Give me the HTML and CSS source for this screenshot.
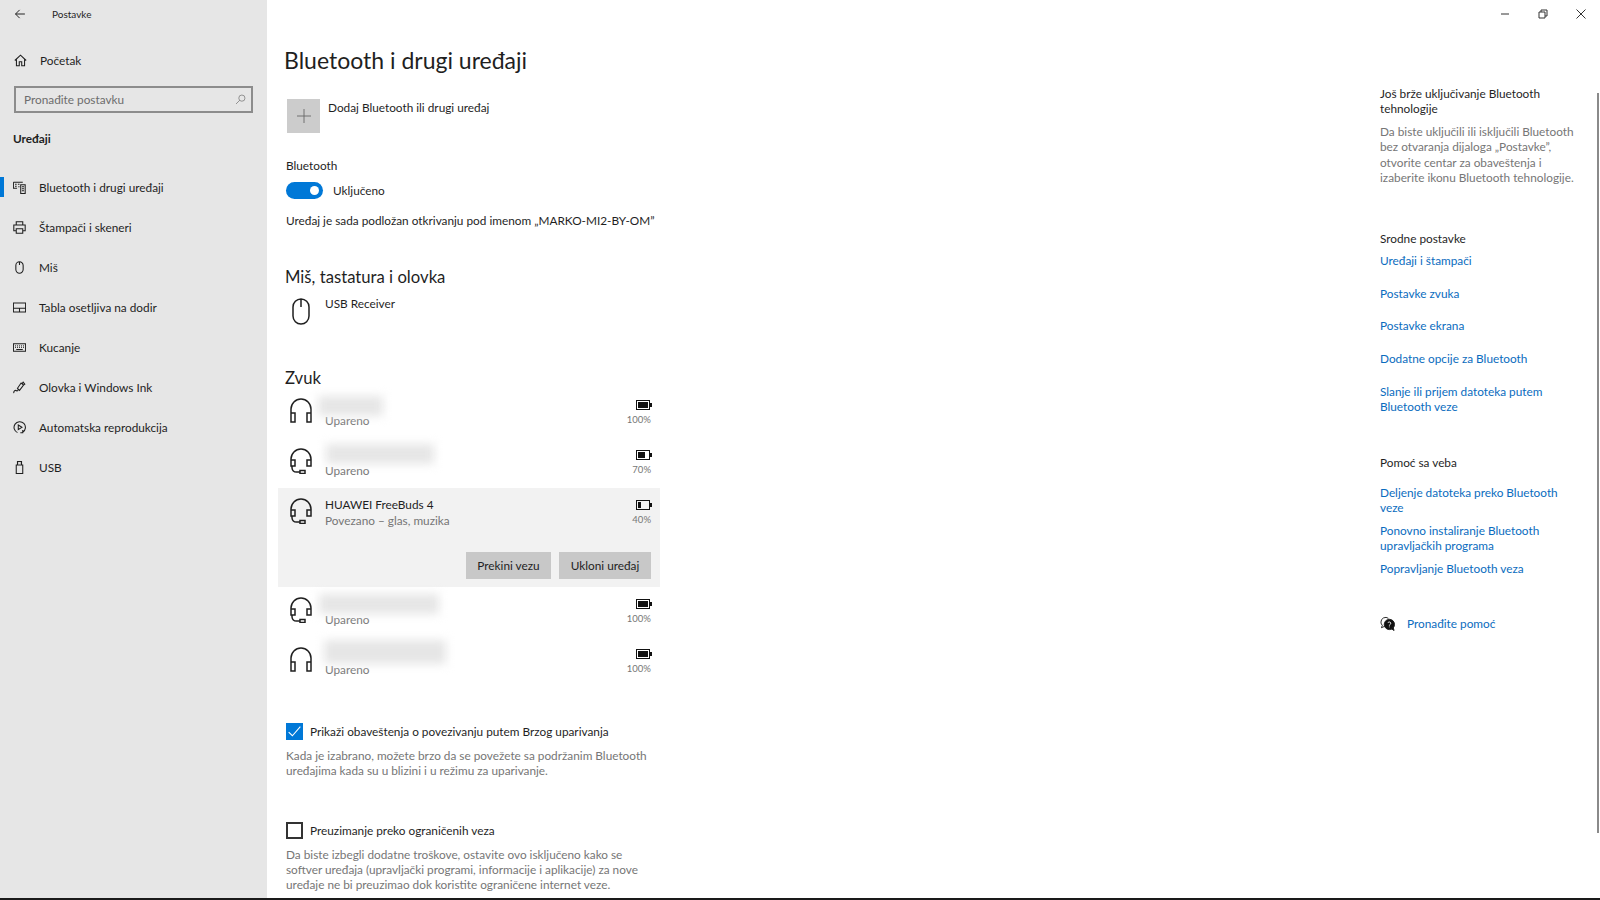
FILE: index.html
```html
<!DOCTYPE html>
<html lang="sr">
<head>
    <meta charset="UTF-8">
    <title>Postavke</title>
    <link rel="stylesheet" href="styles.css">
</head>
<body>
    <div class="window">
        <nav class="sidebar">
            <div class="app-title">
                <svg class="back-icon" viewBox="0 0 16 16"><path d="M14.5 8H2M7.5 2.5 2 8l5.500 5.500"/></svg>
                <span>Postavke</span>
            </div>
            <a class="home-link">
                <svg class="nav-icon" viewBox="0 0 16 16"><path d="M1 8 8 1.500 15 8M3 6.500V14.500H6.500V9.500H9.500V14.500H13V6.500"/></svg>
                <span>Početak</span>
            </a>
            <div class="search-box">
                <span>Pronađite postavku</span>
                <svg class="search-icon" viewBox="0 0 16 16"><circle cx="10" cy="6" r="4.500"/><path d="M6.800 9.200 1.500 14.500"/></svg>
            </div>
            <div class="nav-group">Uređaji</div>
            <ul class="nav-list">
                <li class="nav-item active">
                    <svg class="nav-icon" viewBox="0 0 16 16"><path d="M.5 1.500H12M.5 1.500V9H5M2.500 4H4.500M6 4H8M2.500 6.500H4.500M9.500 4.500H15V15.500H9.500ZM11 7H13.500M11 9.500H13.500M11 12H13.500M6.500 7H8"/></svg>
                    <span>Bluetooth i drugi uređaji</span>
                </li>
                <li class="nav-item">
                    <svg class="nav-icon" viewBox="0 0 16 16"><path d="M4 5V1H12V5M4 12H1V5H15V12H12M4 9.500H12V15H4Z"/></svg>
                    <span>Štampači i skeneri</span>
                </li>
                <li class="nav-item">
                    <svg class="nav-icon" viewBox="0 0 16 16"><path d="M3.500 5.500a4.500 4.500 0 0 1 9 0v5a4.500 4.500 0 0 1-9 0ZM8 1V5"/></svg>
                    <span>Miš</span>
                </li>
                <li class="nav-item">
                    <svg class="nav-icon" viewBox="0 0 16 16"><path d="M.5 2.500H15.500V13.500H.5ZM.5 9H15.500M8 9V13.500"/></svg>
                    <span>Tabla osetljiva na dodir</span>
                </li>
                <li class="nav-item">
                    <svg class="nav-icon" viewBox="0 0 16 16"><path d="M.5 3.500H15.500V12.500H.5ZM2.500 6H3.500M5 6H6M7.500 6H8.500M10 6H11M12.500 6H13.500M2.500 8H3.500M5 8H6M7.500 8H8.500M10 8H11M12.500 8H13.500M4 10.500H12"/></svg>
                    <span>Kucanje</span>
                </li>
                <li class="nav-item">
                    <svg class="nav-icon" viewBox="0 0 16 16"><path d="M1 15C.5 12 3 11 4.500 12S7 10 5.500 9L10 2.500 13 5 8 11.500 5.500 9M11 3.500 12.500 1.500 14.500 4 13 5"/></svg>
                    <span>Olovka i Windows Ink</span>
                </li>
                <li class="nav-item">
                    <svg class="nav-icon" viewBox="0 0 16 16"><path d="M5.500 14.300A7 7 0 1 1 12 13.800M6.500 5V10.500L11 7.800ZM12 11V14.500H9"/></svg>
                    <span>Automatska reprodukcija</span>
                </li>
                <li class="nav-item">
                    <svg class="nav-icon" viewBox="0 0 16 16"><path d="M4 5H12V15.500H4ZM5.500 5V.5H10.500V5M7 2.500H7.500M8.700 2.500H9.200"/></svg>
                    <span>USB</span>
                </li>
            </ul>
        </nav>

        <main class="main">
            <h1 class="page-title">Bluetooth i drugi uređaji</h1>
            <div class="add-device">
                <div class="add-tile">
                    <svg viewBox="0 0 16 16"><path d="M8 0V16M0 8H16"/></svg>
                </div>
                <span class="add-label">Dodaj Bluetooth ili drugi uređaj</span>
            </div>
            <div class="bt-label">Bluetooth</div>
            <div class="toggle-row">
                <span class="toggle"><span class="toggle-knob"></span></span>
                <span>Uključeno</span>
            </div>
            <p class="discover">Uređaj je sada podložan otkrivanju pod imenom „MARKO-MI2-BY-OM”</p>

            <h2 class="section-title first">Miš, tastatura i olovka</h2>
            <div class="receiver">
                <svg class="mouse-icon" viewBox="0 0 18 27"><path d="M1 9a8 8 0 0 1 16 0v9a8 8 0 0 1-16 0ZM9 1V9"/></svg>
                <span>USB Receiver</span>
            </div>

            <h2 class="section-title">Zvuk</h2>
            <div class="device-list">
                <div class="device">
                    <svg class="device-icon" viewBox="0 0 22 26"><path d="M1 24V11a10 10 0 0 1 20 0V24M1 15H5V24H1ZM17 15H21V24H17Z"/></svg>
                    <div class="device-info">
                        <span class="redact redact-1"></span>
                        <div class="device-name"></div>
                        <div class="device-status">Upareno</div>
                    </div>
                    <div class="battery">
                        <span class="battery-icon"><span class="battery-fill level-100"></span></span>
                        <span class="battery-pct">100%</span>
                    </div>
                </div>
                <div class="device">
                    <svg class="device-icon" viewBox="0 0 22 26"><path d="M1 18V11a10 10 0 0 1 20 0V18M1 12H5V18H1ZM17 12H21V18H17ZM2 18V20a4.500 4.500 0 0 0 4.500 4H10M10 22.500H15V25.500H10Z"/></svg>
                    <div class="device-info">
                        <span class="redact redact-2"></span>
                        <div class="device-name"></div>
                        <div class="device-status">Upareno</div>
                    </div>
                    <div class="battery">
                        <span class="battery-icon"><span class="battery-fill level-70"></span></span>
                        <span class="battery-pct">70%</span>
                    </div>
                </div>
                <div class="device-open">
                    <div class="device">
                        <svg class="device-icon" viewBox="0 0 22 26"><path d="M1 18V11a10 10 0 0 1 20 0V18M1 12H5V18H1ZM17 12H21V18H17ZM2 18V20a4.500 4.500 0 0 0 4.500 4H10M10 22.500H15V25.500H10Z"/></svg>
                        <div class="device-info">
                            <div class="device-name">HUAWEI FreeBuds 4</div>
                            <div class="device-status">Povezano – glas, muzika</div>
                        </div>
                        <div class="battery">
                            <span class="battery-icon"><span class="battery-fill level-40"></span></span>
                            <span class="battery-pct">40%</span>
                        </div>
                    </div>
                    <div class="device-actions">
                        <button class="action-btn btn-disconnect">Prekini vezu</button>
                        <button class="action-btn btn-remove">Ukloni uređaj</button>
                    </div>
                </div>
                <div class="device">
                    <svg class="device-icon" viewBox="0 0 22 26"><path d="M1 18V11a10 10 0 0 1 20 0V18M1 12H5V18H1ZM17 12H21V18H17ZM2 18V20a4.500 4.500 0 0 0 4.500 4H10M10 22.500H15V25.500H10Z"/></svg>
                    <div class="device-info">
                        <span class="redact redact-3"></span>
                        <div class="device-name"></div>
                        <div class="device-status">Upareno</div>
                    </div>
                    <div class="battery">
                        <span class="battery-icon"><span class="battery-fill level-100"></span></span>
                        <span class="battery-pct">100%</span>
                    </div>
                </div>
                <div class="device">
                    <svg class="device-icon" viewBox="0 0 22 26"><path d="M1 24V11a10 10 0 0 1 20 0V24M1 15H5V24H1ZM17 15H21V24H17Z"/></svg>
                    <div class="device-info">
                        <span class="redact redact-4"></span>
                        <div class="device-name"></div>
                        <div class="device-status">Upareno</div>
                    </div>
                    <div class="battery">
                        <span class="battery-icon"><span class="battery-fill level-100"></span></span>
                        <span class="battery-pct">100%</span>
                    </div>
                </div>
            </div>

            <div class="check-row check-swift">
                <span class="checkbox checked">
                    <svg viewBox="0 0 16 16"><path d="M2.500 8.500 6 12 13.500 3.500"/></svg>
                </span>
                <span>Prikaži obaveštenja o povezivanju putem Brzog uparivanja</span>
            </div>
            <p class="hint">Kada je izabrano, možete brzo da se povežete sa podržanim Bluetooth<br>uređajima kada su u blizini i u režimu za uparivanje.</p>

            <div class="check-row check-metered">
                <span class="checkbox"></span>
                <span>Preuzimanje preko ograničenih veza</span>
            </div>
            <p class="hint">Da biste izbegli dodatne troškove, ostavite ovo isključeno kako se<br>softver uređaja (upravljački programi, informacije i aplikacije) za nove<br>uređaje ne bi preuzimao dok koristite ograničene internet veze.</p>
        </main>

        <aside class="aside">
            <div class="win-controls">
                <span class="win-btn"><svg viewBox="0 0 10 10"><path d="M1 5H9"/></svg></span>
                <span class="win-btn"><svg viewBox="0 0 10 10"><path d="M1 3H7V9H1ZM3 3V1H9V7H7"/></svg></span>
                <span class="win-btn"><svg viewBox="0 0 10 10"><path d="M.5.500 9.500 9.500M9.500.500 .5 9.500"/></svg></span>
            </div>
            <h3 class="aside-title tip-title">Još brže uključivanje Bluetooth<br>tehnologije</h3>
            <p class="aside-text">Da biste uključili ili isključili Bluetooth<br>bez otvaranja dijaloga „Postavke”,<br>otvorite centar za obaveštenja i<br>izaberite ikonu Bluetooth tehnologije.</p>

            <h3 class="aside-title related-title">Srodne postavke</h3>
            <a class="aside-link link-wide">Uređaji i štampači</a>
            <a class="aside-link link-wide">Postavke zvuka</a>
            <a class="aside-link link-wide">Postavke ekrana</a>
            <a class="aside-link link-wide">Dodatne opcije za Bluetooth</a>
            <a class="aside-link link-wide">Slanje ili prijem datoteka putem<br>Bluetooth veze</a>

            <h3 class="aside-title web-title">Pomoć sa veba</h3>
            <a class="aside-link">Deljenje datoteka preko Bluetooth<br>veze</a>
            <a class="aside-link">Ponovno instaliranje Bluetooth<br>upravljačkih programa</a>
            <a class="aside-link">Popravljanje Bluetooth veza</a>

            <div class="help-row">
                <svg class="help-icon" viewBox="0 0 16 16">
                    <path class="help-back" d="M9 2.500A5 5 0 0 0 1 6.500C1 8 1.500 9 2.500 10L1.500 12.500 5 11"/>
                    <circle class="help-dot" cx="10" cy="9" r="5.500"/>
                    <path class="help-tail" d="M12 13.500 15 15.500 14 12Z"/>
                    <path class="help-mark" d="M8.500 7.500C8.500 6 11.500 6 11.500 7.700 11.500 9 10 8.800 10 10.300M10 11.300V12"/>
                </svg>
                <a class="aside-link help-link">Pronađite pomoć</a>
            </div>
            <span class="scroll-thumb"></span>
        </aside>
    </div>
    <div class="bottom-edge"></div>
</body>
</html>
```

FILE: styles.css
```css
* {
    box-sizing: border-box;
}

html, body {
    margin: 0;
    height: 900px;
    overflow: hidden;
    background-color: #ffffff;
}

body {
    font-family: "Lato", "Open Sans", sans-serif;
    font-size: 11.8px;
    color: #1f1f1f;
}

svg {
    fill: none;
    stroke: currentColor;
    stroke-width: 1;
    display: block;
}

p, h1, h2, h3, ul {
    margin: 0;
    padding: 0;
    font-weight: 400;
}

.window {
    display: flex;
    height: 898px;
}

.bottom-edge {
    height: 2px;
    background-color: #1a1a1a;
}

/* Barre laterale */
.sidebar {
    width: 267px;
    flex-shrink: 0;
    background-color: #e6e6e6;
}

.app-title {
    display: flex;
    align-items: center;
    height: 28px;
    padding-left: 14px;
    font-size: 10px;
}

.back-icon {
    width: 12px;
    height: 12px;
    margin-right: 26px;
    stroke-width: 1.3;
}

.home-link {
    display: flex;
    align-items: center;
    height: 20px;
    margin-top: 22px;
    padding-left: 14px;
}

.nav-icon {
    width: 13px;
    height: 13px;
    margin-right: 13px;
    flex-shrink: 0;
    stroke-width: 1.3;
}

.search-box {
    display: flex;
    align-items: center;
    justify-content: space-between;
    height: 27px;
    margin: 16px 14px 0;
    padding: 0 5px 0 8px;
    border: 2px solid #8c8c8c;
    color: #6d6d6d;
}

.search-icon {
    width: 11px;
    height: 11px;
}

.nav-group {
    margin-top: 18px;
    padding-left: 13px;
    font-weight: 700;
}

.nav-list {
    margin-top: 21px;
    list-style: none;
}

.nav-item {
    display: flex;
    align-items: center;
    height: 40px;
    padding-left: 13px;
}

.nav-item.active {
    background-image: linear-gradient(#0078d7, #0078d7);
    background-size: 4px 20px;
    background-position: 0 10px;
    background-repeat: no-repeat;
}

/* Colonne principale */
.main {
    width: 398px;
    padding-left: 19px;
    flex-shrink: 0;
}

.page-title {
    margin-top: 44px;
    margin-left: -2px;
    font-size: 23px;
    line-height: 32px;
}

.add-device {
    display: flex;
    align-items: flex-start;
    margin-top: 23px;
    padding-left: 1px;
}

.add-label {
    margin-top: 1px;
}

.add-tile {
    display: flex;
    align-items: center;
    justify-content: center;
    width: 33px;
    height: 34px;
    margin-right: 8px;
    background-color: #cccccc;
    color: #666666;
}

.add-tile svg {
    width: 14px;
    height: 14px;
}

.bt-label {
    margin-top: 24px;
    line-height: 18px;
}

.toggle-row {
    display: flex;
    align-items: center;
    margin-top: 7px;
    gap: 10px;
}

.toggle {
    display: flex;
    align-items: center;
    justify-content: flex-end;
    width: 37px;
    height: 17px;
    padding-right: 4px;
    border-radius: 9px;
    background-color: #0078d7;
}

.toggle-knob {
    width: 9px;
    height: 9px;
    border-radius: 50%;
    background-color: #ffffff;
}

.discover {
    margin-top: 13px;
    line-height: 18px;
    white-space: nowrap;
}

.section-title {
    margin-left: -1px;
    font-size: 16.7px;
    line-height: 24px;
    margin-top: 41px;
}

.section-title.first {
    margin-top: 35px;
}

.receiver {
    display: flex;
    align-items: flex-start;
    margin-top: 7px;
    margin-left: 6px;
}

.mouse-icon {
    width: 18px;
    height: 27px;
    margin-top: 2px;
    margin-right: 15px;
    stroke-width: 1.5;
}

.device-list {
    margin-left: -8px;
    width: 382px;
    margin-top: 2px;
}

.device {
    display: flex;
    height: 50px;
    padding: 4px 9px 0 8px;
}

.device-icon {
    width: 22px;
    height: 26px;
    margin: 2px 12px 0 4px;
    stroke-width: 1.5;
}

.device-info {
    position: relative;
    flex: 1;
    margin-left: 1px;
}

.device-name {
    height: 16px;
}

.device-status {
    line-height: 18px;
    color: #767676;
}

.redact {
    position: absolute;
    height: 20px;
    background-color: #e6e6e6;
    filter: blur(5px);
}

.redact-1 {
    left: -7px;
    top: 0;
    width: 65px;
}

.redact-2 {
    left: 1px;
    top: -2px;
    width: 108px;
}

.redact-3 {
    left: -6px;
    top: -1px;
    width: 120px;
}

.redact-4 {
    left: -1px;
    top: -5px;
    width: 122px;
    height: 24px;
}

.battery {
    display: flex;
    flex-direction: column;
    align-items: flex-end;
}

.battery-icon {
    display: block;
    position: relative;
    width: 14px;
    height: 10px;
    margin-top: 4px;
    margin-right: 1px;
    padding: 1px;
    border: 1px solid #111111;
}

.battery-icon::after {
    content: "";
    position: absolute;
    right: -3px;
    top: 2px;
    width: 2px;
    height: 4px;
    background-color: #111111;
}

.battery-fill {
    display: block;
    height: 100%;
    background-color: #111111;
}

.level-100 {
    width: 100%;
}

.level-70 {
    width: 70%;
}

.level-40 {
    width: 30%;
}

.battery-pct {
    margin-top: 3px;
    font-size: 9.5px;
    line-height: 13px;
    color: #767676;
}

.device-open {
    height: 99px;
    margin: -4px 0 4px;
    padding-top: 4px;
    background-color: #f2f2f2;
}

.device-open .device-info {
    padding-top: 1px;
}

.device-open .device-name {
    height: 15px;
}

.device-actions {
    display: flex;
    justify-content: flex-end;
    gap: 8px;
    padding: 10px 9px 0 8px;
}

.action-btn {
    height: 27px;
    padding: 0;
    border: none;
    background-color: #c8c8c8;
    color: #1f1f1f;
    font-family: inherit;
    font-size: 11.8px;
}

.btn-disconnect {
    width: 85px;
}

.btn-remove {
    width: 92px;
}

.check-row {
    display: flex;
    align-items: center;
    gap: 7px;
}

.check-swift {
    margin-top: 32px;
}

.check-metered {
    margin-top: 43px;
}

.checkbox {
    width: 17px;
    height: 17px;
    border: 2px solid #333333;
    color: #ffffff;
}

.checkbox.checked {
    border: none;
    background-color: #0078d7;
}

.hint {
    margin-top: 8px;
    line-height: 15.3px;
    color: #767676;
    white-space: nowrap;
}

/* Colonne de droite */
.aside {
    position: relative;
    margin-left: auto;
    width: 220px;
    flex-shrink: 0;
}

.win-controls {
    display: flex;
    justify-content: flex-end;
    height: 28px;
}

.win-btn {
    display: flex;
    align-items: center;
    justify-content: center;
    width: 38px;
    color: #333333;
}

.win-btn svg {
    width: 10px;
    height: 10px;
}

.aside-title {
    font-size: 11.8px;
    line-height: 15px;
}

.tip-title {
    margin-top: 58px;
}

.aside-text {
    margin-top: 8px;
    line-height: 15.3px;
    color: #767676;
}

.related-title {
    margin-top: 46px;
}

.web-title {
    margin-top: 41px;
}

.aside-link {
    display: block;
    margin-top: 8px;
    line-height: 15px;
    color: #0a6cbe;
}

.link-wide {
    margin-top: 17.6px;
}

.related-title + .link-wide {
    margin-top: 7px;
}

.web-title + .aside-link {
    margin-top: 15px;
}

.help-row {
    display: flex;
    align-items: center;
    margin-top: 40px;
}

.help-icon {
    width: 15px;
    height: 15px;
    margin-right: 12px;
}

.help-dot, .help-tail {
    fill: #111111;
}

.help-mark {
    stroke: #ffffff;
}

.help-link {
    margin-top: 0;
}

.scroll-thumb {
    position: absolute;
    right: 1px;
    top: 93px;
    width: 2px;
    height: 740px;
    background-color: #8a8a8a;
}
```
